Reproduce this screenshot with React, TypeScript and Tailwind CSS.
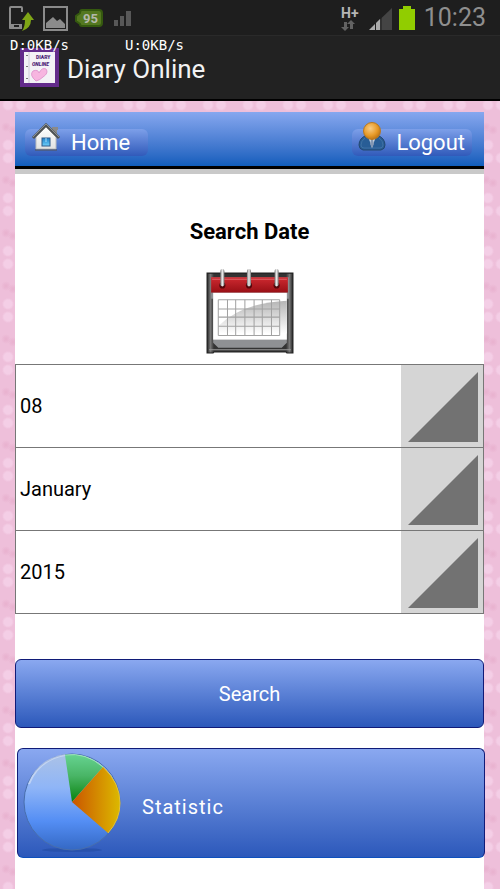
import type { ReactNode } from "react";

type Field = {
  id: string;
  label: string;
  value: string;
  options: string[];
};

const fields: Field[] = [
  { id: "day", label: "Day", value: "08", options: ["07", "08", "09"] },
  { id: "month", label: "Month", value: "January", options: ["January", "February", "March"] },
  { id: "year", label: "Year", value: "2015", options: ["2014", "2015", "2016"] },
];

const gridColumns = [49, 58, 66, 75, 84, 92, 101, 109];
const gridRows = [89, 98, 106, 115, 124];

function StatusBar() {
  return (
    <div className="flex h-9 items-center justify-between border-b border-[#2a2a2a] bg-[#1e1e1e] pr-[14px] pl-2">
      <svg width="126" height="34" viewBox="8 0 126 34" aria-hidden="true">
        <path d="M22 11V7q0-1-1-1H11q-1 0-1 1v19q0 1 1 1h9" fill="none" stroke="#8b8b8b" strokeWidth="2" />
        <path d="M9 23h13v5H10q-1 0-1-1z" fill="#8b8b8b" />
        <path d="M14 25h5" stroke="#1e1e1e" strokeWidth="2" />
        <path d="M28 11l6 8h-3q0 8-9 11q3-4 3-11h-3z" fill="#7fa616" />
        <rect x="44" y="6" width="23" height="23" fill="none" stroke="#8b8b8b" strokeWidth="2" />
        <path d="M46 27v-5l7-6 4 4 3-2 5 5v4z" fill="#8b8b8b" />
        <path d="M82 9h17q3 0 3 3v10q0 3-3 3H82q-2 0-2-2l-4-3v-5l4-3q0-3 2-3z" fill="#547820" stroke="#35590f" strokeWidth="2" />
        <text x="83" y="22" fill="#b4b8ab" fontFamily="Roboto, sans-serif" fontSize="13" fontWeight="700">95</text>
        <path d="M114 19h4v6h-4zM120 15h4v10h-4zM126 10h5v15h-5z" fill="#585858" />
      </svg>
      <div className="flex items-center gap-2">
        <svg width="78" height="34" viewBox="338 0 78 34" aria-hidden="true">
          <text x="341" y="17" fill="#b5b5b5" fontFamily="Roboto, sans-serif" fontSize="14" fontWeight="700">H+</text>
          <path d="M344 21h3v5h2l-4 4-4-4h3zM350 28h3v-5h2l-4-4-4 4h3z" fill="#626262" />
          <path d="M392 7v22h-23z" fill="#444" />
          <path d="M375 23v6h-6zM380 18v11h-4v-7z" fill="#aaa" />
          <path d="M375.500 22v7M381 17v12" stroke="#1e1e1e" strokeWidth="1" />
          <path d="M403 5h8v3h4v21h-16V8h4z" fill="#91cd00" />
        </svg>
        <span className="text-[25px] leading-8 text-[#8f8f8f]">10:23</span>
      </div>
    </div>
  );
}

function DiaryIcon() {
  return (
    <svg width="39" height="39" viewBox="0 0 39 39" aria-hidden="true">
      <rect width="39" height="39" fill="#632b8b" />
      <rect x="4" y="4" width="31" height="31" fill="#f3f1f6" />
      <path d="M9 4v31" stroke="#cfcbd8" />
      <path d="M7 7v1M7 18v1M7 30v1" stroke="#777" strokeWidth="2" />
      <text x="16" y="11" fill="#4b1975" fontFamily="Roboto, sans-serif" fontSize="5" fontWeight="900">DIARY</text>
      <text x="12" y="18" fill="#4b1975" fontFamily="Roboto, sans-serif" fontSize="5" fontWeight="900" fontStyle="italic">ONLINE</text>
      <path d="M16 33q-7-6-3-10 5-2 6 2 3-6 7-4 3 4-3 8-3 3-7 4z" fill="#f7b5e0" stroke="#e29ad0" />
    </svg>
  );
}

function HomeIcon() {
  return (
    <svg width="30" height="28" viewBox="0 0 30 28" aria-hidden="true">
      <defs>
        <linearGradient id="wall" x1="0" y1="0" x2="0" y2="1">
          <stop stopColor="#fff" />
          <stop offset="1" stopColor="#e2e2e2" />
        </linearGradient>
        <linearGradient id="pane" x1="0" y1="0" x2="0" y2="1">
          <stop stopColor="#1c7fc9" />
          <stop offset="1" stopColor="#6fd0fb" />
        </linearGradient>
      </defs>
      <path d="M21 4h6v3h-1v6h-5z" fill="#8a8a8a" />
      <path d="M5 14L15 4l10 10v12H5z" fill="url(#wall)" stroke="#bbb" />
      <path d="M4 27h22" stroke="#555" />
      <path d="M2 15L15 2l13 13" fill="none" stroke="#4f5355" strokeWidth="3" />
      <path d="M2 14L15 1l13 13" fill="none" stroke="#8c9092" strokeWidth="1" />
      <rect x="11" y="15" width="8" height="8" fill="url(#pane)" stroke="#2f5a8a" />
      <path d="M15 15v4" stroke="#a6defa" />
    </svg>
  );
}

function UserIcon() {
  return (
    <svg width="28" height="29" viewBox="0 0 28 29" aria-hidden="true">
      <defs>
        <radialGradient id="head" cx=".4" cy=".35" r=".7">
          <stop stopColor="#f8cc84" />
          <stop offset=".6" stopColor="#e79a28" />
          <stop offset="1" stopColor="#b66e10" />
        </radialGradient>
      </defs>
      <path d="M9 13h10q8 3 8 10 0 4-4 5H5q-4-1-4-5 0-7 8-10z" fill="#285d96" stroke="#23486f" />
      <path d="M7 16q-4 3-4 7 0 3 3 3h16q3 0 3-3 0-4-4-7" fill="none" stroke="#3f71a3" />
      <path d="M10 14h8l-4 12z" fill="#dce6ef" />
      <path d="M13 17h2l1 5-2 4-2-4z" fill="#8397b3" />
      <circle cx="14" cy="9" r="8.500" fill="url(#head)" stroke="#b57824" />
    </svg>
  );
}

function CalendarIcon() {
  return (
    <svg width="88" height="88" viewBox="37 58 86 86" aria-hidden="true">
      <defs>
        <linearGradient id="frame">
          <stop stopColor="#222" />
          <stop offset=".04" stopColor="#777" />
          <stop offset=".08" stopColor="#333" />
          <stop offset=".92" stopColor="#333" />
          <stop offset=".96" stopColor="#777" />
          <stop offset="1" stopColor="#222" />
        </linearGradient>
        <linearGradient id="shade" x1="0" y1="0" x2="0" y2="1">
          <stop stopColor="#b5b5b5" />
          <stop offset="1" stopColor="#fff" />
        </linearGradient>
        <linearGradient id="red" x1="0" y1="0" x2="0" y2="1">
          <stop stopColor="#cf2a31" />
          <stop offset="1" stopColor="#980f15" />
        </linearGradient>
        <linearGradient id="ring">
          <stop stopColor="#777" />
          <stop offset=".5" stopColor="#eee" />
          <stop offset="1" stopColor="#777" />
        </linearGradient>
      </defs>
      <path d="M38 63h84v78h-6l-1-1H45l-1 1h-6z" fill="url(#frame)" stroke="#222" />
      <path d="M40 138h80" stroke="#999" />
      <path d="M42 67h76v21h-2v43l-5 5H49l-5-5V88h-2z" fill="#8f9194" />
      <rect x="44" y="82" width="72" height="46" fill="#fff" />
      <path d="M50 114q22-22 66-24v32H50z" fill="url(#shade)" />
      <rect x="42" y="67" width="75" height="15" fill="url(#red)" />
      <path d="M43 69h73" stroke="#de6669" />
      {gridColumns.map((x) => (
        <path key={x} d={`M${x} 89v35`} stroke="#a2a2a2" />
      ))}
      {gridRows.map((y) => (
        <path key={y} d={`M49 ${y}h60`} stroke="#a2a2a2" />
      ))}
      {[53, 79, 106].map((x) => (
        <g key={x}>
          <circle cx={x} cy="75" r="3" fill="#55070b" />
          <rect x={x - 2} y="59" width="4" height="17" rx="2" fill="url(#ring)" />
        </g>
      ))}
    </svg>
  );
}

function PieIcon() {
  return (
    <svg width="98" height="100" viewBox="0 0 98 100" aria-hidden="true">
      <defs>
        <linearGradient id="blue" x1="0" y1="0" x2="0" y2="1">
          <stop stopColor="#abc2e6" />
          <stop offset=".35" stopColor="#8fb5f7" />
          <stop offset=".7" stopColor="#548ef4" />
          <stop offset="1" stopColor="#3468c4" />
        </linearGradient>
        <linearGradient id="green" x1="0" y1="0" x2="0" y2="1">
          <stop stopColor="#66d391" />
          <stop offset=".45" stopColor="#49b566" />
          <stop offset="1" stopColor="#07820c" />
        </linearGradient>
        <linearGradient id="orange">
          <stop stopColor="#ca5500" />
          <stop offset="1" stopColor="#dcb900" />
        </linearGradient>
      </defs>
      <ellipse cx="49" cy="97" rx="30" ry="2" fill="#2852ad" />
      <circle cx="49" cy="49" r="48" fill="url(#blue)" stroke="#486eac" />
      <path d="M49 49L42 2q21-3 38 12z" fill="url(#green)" />
      <path d="M49 49L80 14q17 16 17 36 0 17-12 30z" fill="url(#orange)" />
      <path d="M6 31Q15 7 42 2" fill="none" stroke="#d1def5" strokeWidth="2" opacity=".7" />
      <path d="M42 2q21-3 38 12" fill="none" stroke="#a0e6b8" />
      <path d="M80 14q17 16 17 36 0 17-12 30" fill="none" stroke="#e3c13a" />
    </svg>
  );
}

function NavLink({ icon, children }: { icon: ReactNode; children: ReactNode }) {
  return (
    <a
      href="#"
      className="flex h-[27px] items-end rounded-md bg-linear-to-b from-[#7d9fe9] to-[#315aba] text-[22px] leading-[26px] text-white"
    >
      {icon}
      {children}
    </a>
  );
}

export default function App() {
  return (
    <div className="min-h-screen bg-[#eebfda] bg-[radial-gradient(circle_at_8px_25px,#f4cee6_4px,transparent_6px),radial-gradient(circle_at_8px_38px,#f4cee6_4px,transparent_6px),radial-gradient(circle_at_21px_38px,#f4cee6_4px,transparent_6px),radial-gradient(circle_at_33px_25px,#f2c9e2_3px,transparent_6px),radial-gradient(circle_at_6px_7px,#e9b3d0_1px,transparent_5px),radial-gradient(circle_at_13px_10px,#e9b3d0_1px,transparent_5px)] bg-[size:40px_53px] bg-[position:0px_14px] font-[Roboto,sans-serif] text-black">
      <header className="relative border-b-2 border-black bg-[#222]">
        <StatusBar />
        <div className="flex h-[63px] items-start gap-2 pt-3 pl-5">
          <DiaryIcon />
          <h1 className="text-[26px] leading-[42px] text-[#f2f2f2]">Diary Online</h1>
        </div>
        <p className="absolute top-9 left-[10px] flex gap-14 font-['DejaVu_Sans_Mono',monospace] text-sm leading-[18px] text-white">
          <span>D:0KB/s</span>
          <span>U:0KB/s</span>
        </p>
      </header>

      <div className="pt-[11px] pr-4 pl-[15px]">
        <main className="min-h-[777px] bg-white">
          <nav className="flex h-[62px] items-start justify-between border-b-[5px] border-[#c9c9c9] bg-linear-to-b from-[#86a7ef] to-[#0059b9] pt-[17px] pr-3 pl-[10px] shadow-[inset_0_-3px_#000]">
            <NavLink icon={<span className="mr-[10px] mb-[5px] ml-[6px]"><HomeIcon /></span>}>
              <span className="pr-[18px]">Home</span>
            </NavLink>
            <NavLink icon={<span className="mr-[10px] mb-[5px] ml-[6px]"><UserIcon /></span>}>
              <span className="pr-[7px]">Logout</span>
            </NavLink>
          </nav>

          <form onSubmit={(e) => e.preventDefault()}>
            <div className="flex flex-col items-center pt-11 pb-2">
              <h2 className="mb-[22px] text-[22px] leading-7 font-bold">Search Date</h2>
              <CalendarIcon />
            </div>

            <div className="border border-b-0 border-[#777]">
              {fields.map((f) => (
                <div key={f.id} className="relative h-[83px] border-b border-[#777]">
                  <select
                    id={f.id}
                    aria-label={f.label}
                    defaultValue={f.value}
                    className="h-full w-full appearance-none bg-white pr-[83px] pl-1 text-xl"
                  >
                    {f.options.map((o) => (
                      <option key={o}>{o}</option>
                    ))}
                  </select>
                  <span className="pointer-events-none absolute inset-y-0 right-0 flex w-[82px] items-center justify-end bg-[#d5d5d5] pt-[2px] pr-[5px]">
                    <svg width="70" height="70" viewBox="0 0 70 70" aria-hidden="true">
                      <path d="M70 0v70H0z" fill="#727272" />
                    </svg>
                  </span>
                </div>
              ))}
            </div>

            <button
              type="submit"
              className="mt-[45px] block h-[69px] w-full rounded-md border border-[#101b78] bg-linear-to-b from-[#8aa8f0] to-[#2c58ba] text-xl text-white"
            >
              Search
            </button>
          </form>

          <a
            href="#"
            className="mt-5 -mr-px ml-[2px] flex h-[110px] items-center gap-[21px] rounded-md border border-[#101b78] border-b-[#0d50bd] bg-linear-to-b from-[#8aa8f0] to-[#2c58ba] pl-[5px] text-xl tracking-wider text-white"
          >
            <PieIcon />
            <span className="pt-2">Statistic</span>
          </a>
        </main>
      </div>
    </div>
  );
}
